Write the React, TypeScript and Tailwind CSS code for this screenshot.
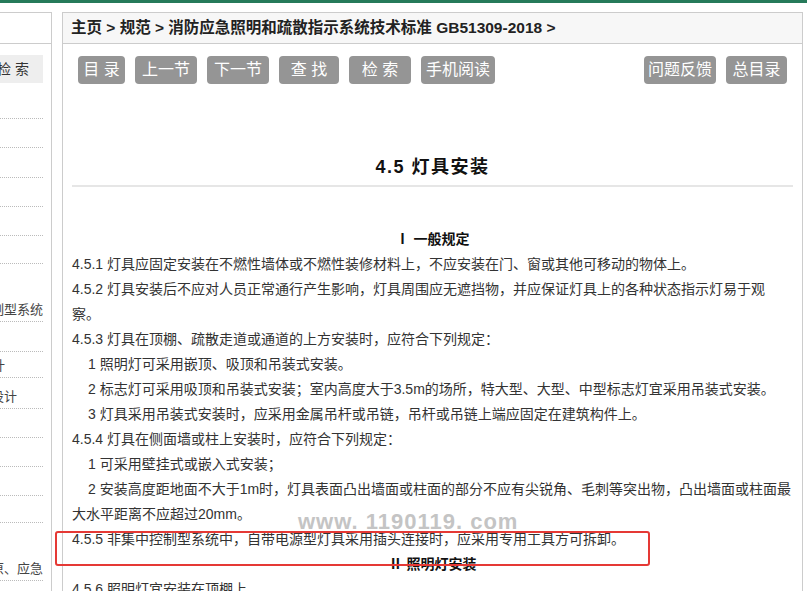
import type { ReactNode } from 'react';

const font = { fontFamily: '"Liberation Sans", "Noto Sans CJK SC", sans-serif' };

// 左侧目录（被横向滚出视野，只剩右端）
const sideItems: { h: number; text?: string; end?: number }[] = [
  { h: 29 },
  { h: 29 },
  { h: 30 },
  { h: 29 },
  { h: 29 },
  { h: 28 },
  { h: 58, text: '制型系统', end: 0 },
  { h: 30 },
  { h: 26, text: '计', end: 38 },
  { h: 31, text: '设计', end: 26 },
  { h: 29 },
  { h: 29 },
  { h: 29 },
  { h: 27 },
  { h: 58, text: '原、应急', end: 0 },
];

const buttonsLeft = [
  { label: '目 录', w: 'w-[47px]' },
  { label: '上一节', w: 'w-[62px]' },
  { label: '下一节', w: 'w-[62px]' },
  { label: '查 找', w: 'w-[60px]' },
  { label: '检 索', w: 'w-[62px]' },
  { label: '手机阅读', w: 'w-[74px]' },
];

function NavButton({ label, w }: { label: string; w: string }) {
  return (
    <div
      className={`${w} h-[28px] rounded-[4px] bg-[#959595] text-white text-[16px] flex items-center justify-center whitespace-pre`}
    >
      {label}
    </div>
  );
}

function Line({ children, indent, bold, center }: { children: ReactNode; indent?: boolean; bold?: boolean; center?: boolean }) {
  return (
    <div
      className={`h-[25px] leading-[25px] whitespace-nowrap ${indent ? 'pl-[16px]' : ''} ${bold ? 'font-bold text-[#111]' : ''} ${center ? 'text-center' : ''}`}
    >
      {children}
    </div>
  );
}

export default function App() {
  return (
    <div className="relative w-[807px] h-[591px] overflow-hidden bg-white text-[#333]" style={font}>
      <div className="h-[3px] bg-[#267a5a]" />

      <div className="mt-[9px] flex items-start">
        {/* 侧栏 */}
        <aside className="w-[52px] shrink-0 border-t border-r border-[#ccc] h-[600px]">
          <div className="h-[31px] border-b border-[#ccc]" />
          <div className="mt-[11px] w-[43px] h-[28px] bg-[#eeeeee] flex items-center justify-end pr-[14px] text-[14px] whitespace-nowrap">
            检 索
          </div>
          <div className="mt-[7px] w-[43px] text-[13px] text-[#444]">
            {sideItems.map((it, i) => (
              <div
                key={i}
                className="border-b border-dotted border-[#bbb] flex items-end justify-end overflow-hidden whitespace-nowrap pb-[2px]"
                style={{ height: it.h }}
              >
                {it.text && <span style={{ marginRight: it.end }}>{it.text}</span>}
              </div>
            ))}
          </div>
        </aside>

        {/* 主体 */}
        <main className="ml-[10px] w-[741px] shrink-0 border-t border-l border-r border-[#ccc] h-[600px]">
          <div className="h-[31px] bg-[#f7f7f7] border-b border-[#ccc] flex items-center pl-[8px] text-[15.5px] font-bold text-[#222] whitespace-nowrap">
            主页 &gt; 规范 &gt; 消防应急照明和疏散指示系统技术标准 GB51309-2018 &gt;
          </div>

          <div className="mt-[12px] px-[15px] flex items-center">
            <div className="flex gap-[10px]">
              {buttonsLeft.map((b) => (
                <NavButton key={b.label} {...b} />
              ))}
            </div>
            <div className="ml-auto flex gap-[10px]">
              <NavButton label="问题反馈" w="w-[72px]" />
              <NavButton label="总目录" w="w-[61px]" />
            </div>
          </div>

          <div className="px-[9px]">
            <h1 className="mt-[70px] h-[26px] text-center text-[18px] font-bold tracking-[1.5px] text-[#111] leading-[26px]">
              4.5 灯具安装
            </h1>
            <div className="mt-[5px] h-[2px] bg-[#e6e6e6]" />

            <div className="mt-[40px] text-[14px]">
              <Line bold center>Ⅰ 一般规定</Line>
              <Line>4.5.1 灯具应固定安装在不燃性墙体或不燃性装修材料上，不应安装在门、窗或其他可移动的物体上。</Line>
              <Line>4.5.2 灯具安装后不应对人员正常通行产生影响，灯具周围应无遮挡物，并应保证灯具上的各种状态指示灯易于观</Line>
              <Line>察。</Line>
              <Line>4.5.3 灯具在顶棚、疏散走道或通道的上方安装时，应符合下列规定：</Line>
              <Line indent>1 照明灯可采用嵌顶、吸顶和吊装式安装。</Line>
              <Line indent>2 标志灯可采用吸顶和吊装式安装；室内高度大于3.5m的场所，特大型、大型、中型标志灯宜采用吊装式安装。</Line>
              <Line indent>3 灯具采用吊装式安装时，应采用金属吊杆或吊链，吊杆或吊链上端应固定在建筑构件上。</Line>
              <Line>4.5.4 灯具在侧面墙或柱上安装时，应符合下列规定：</Line>
              <Line indent>1 可采用壁挂式或嵌入式安装；</Line>
              <Line indent>2 安装高度距地面不大于1m时，灯具表面凸出墙面或柱面的部分不应有尖锐角、毛刺等突出物，凸出墙面或柱面最</Line>
              <Line>大水平距离不应超过20mm。</Line>
              <Line>4.5.5 非集中控制型系统中，自带电源型灯具采用插头连接时，应采用专用工具方可拆卸。</Line>
              <Line bold center>Ⅱ 照明灯安装</Line>
              <Line>4.5.6 照明灯宜安装在顶棚上。</Line>
            </div>
          </div>
        </main>
      </div>

      {/* 水印 */}
      <div className="absolute left-[298px] top-[505px] text-[22px] font-bold tracking-[1px] text-[#c4c4c4] whitespace-nowrap" style={{ fontFamily: '"Liberation Sans", sans-serif' }}>
        www. 1190119. com
      </div>

      {/* 红框标注 */}
      <div className="absolute left-[55px] top-[531px] w-[595px] h-[35px] border-2 border-[#e53935] rounded-[3px]" />
    </div>
  );
}
